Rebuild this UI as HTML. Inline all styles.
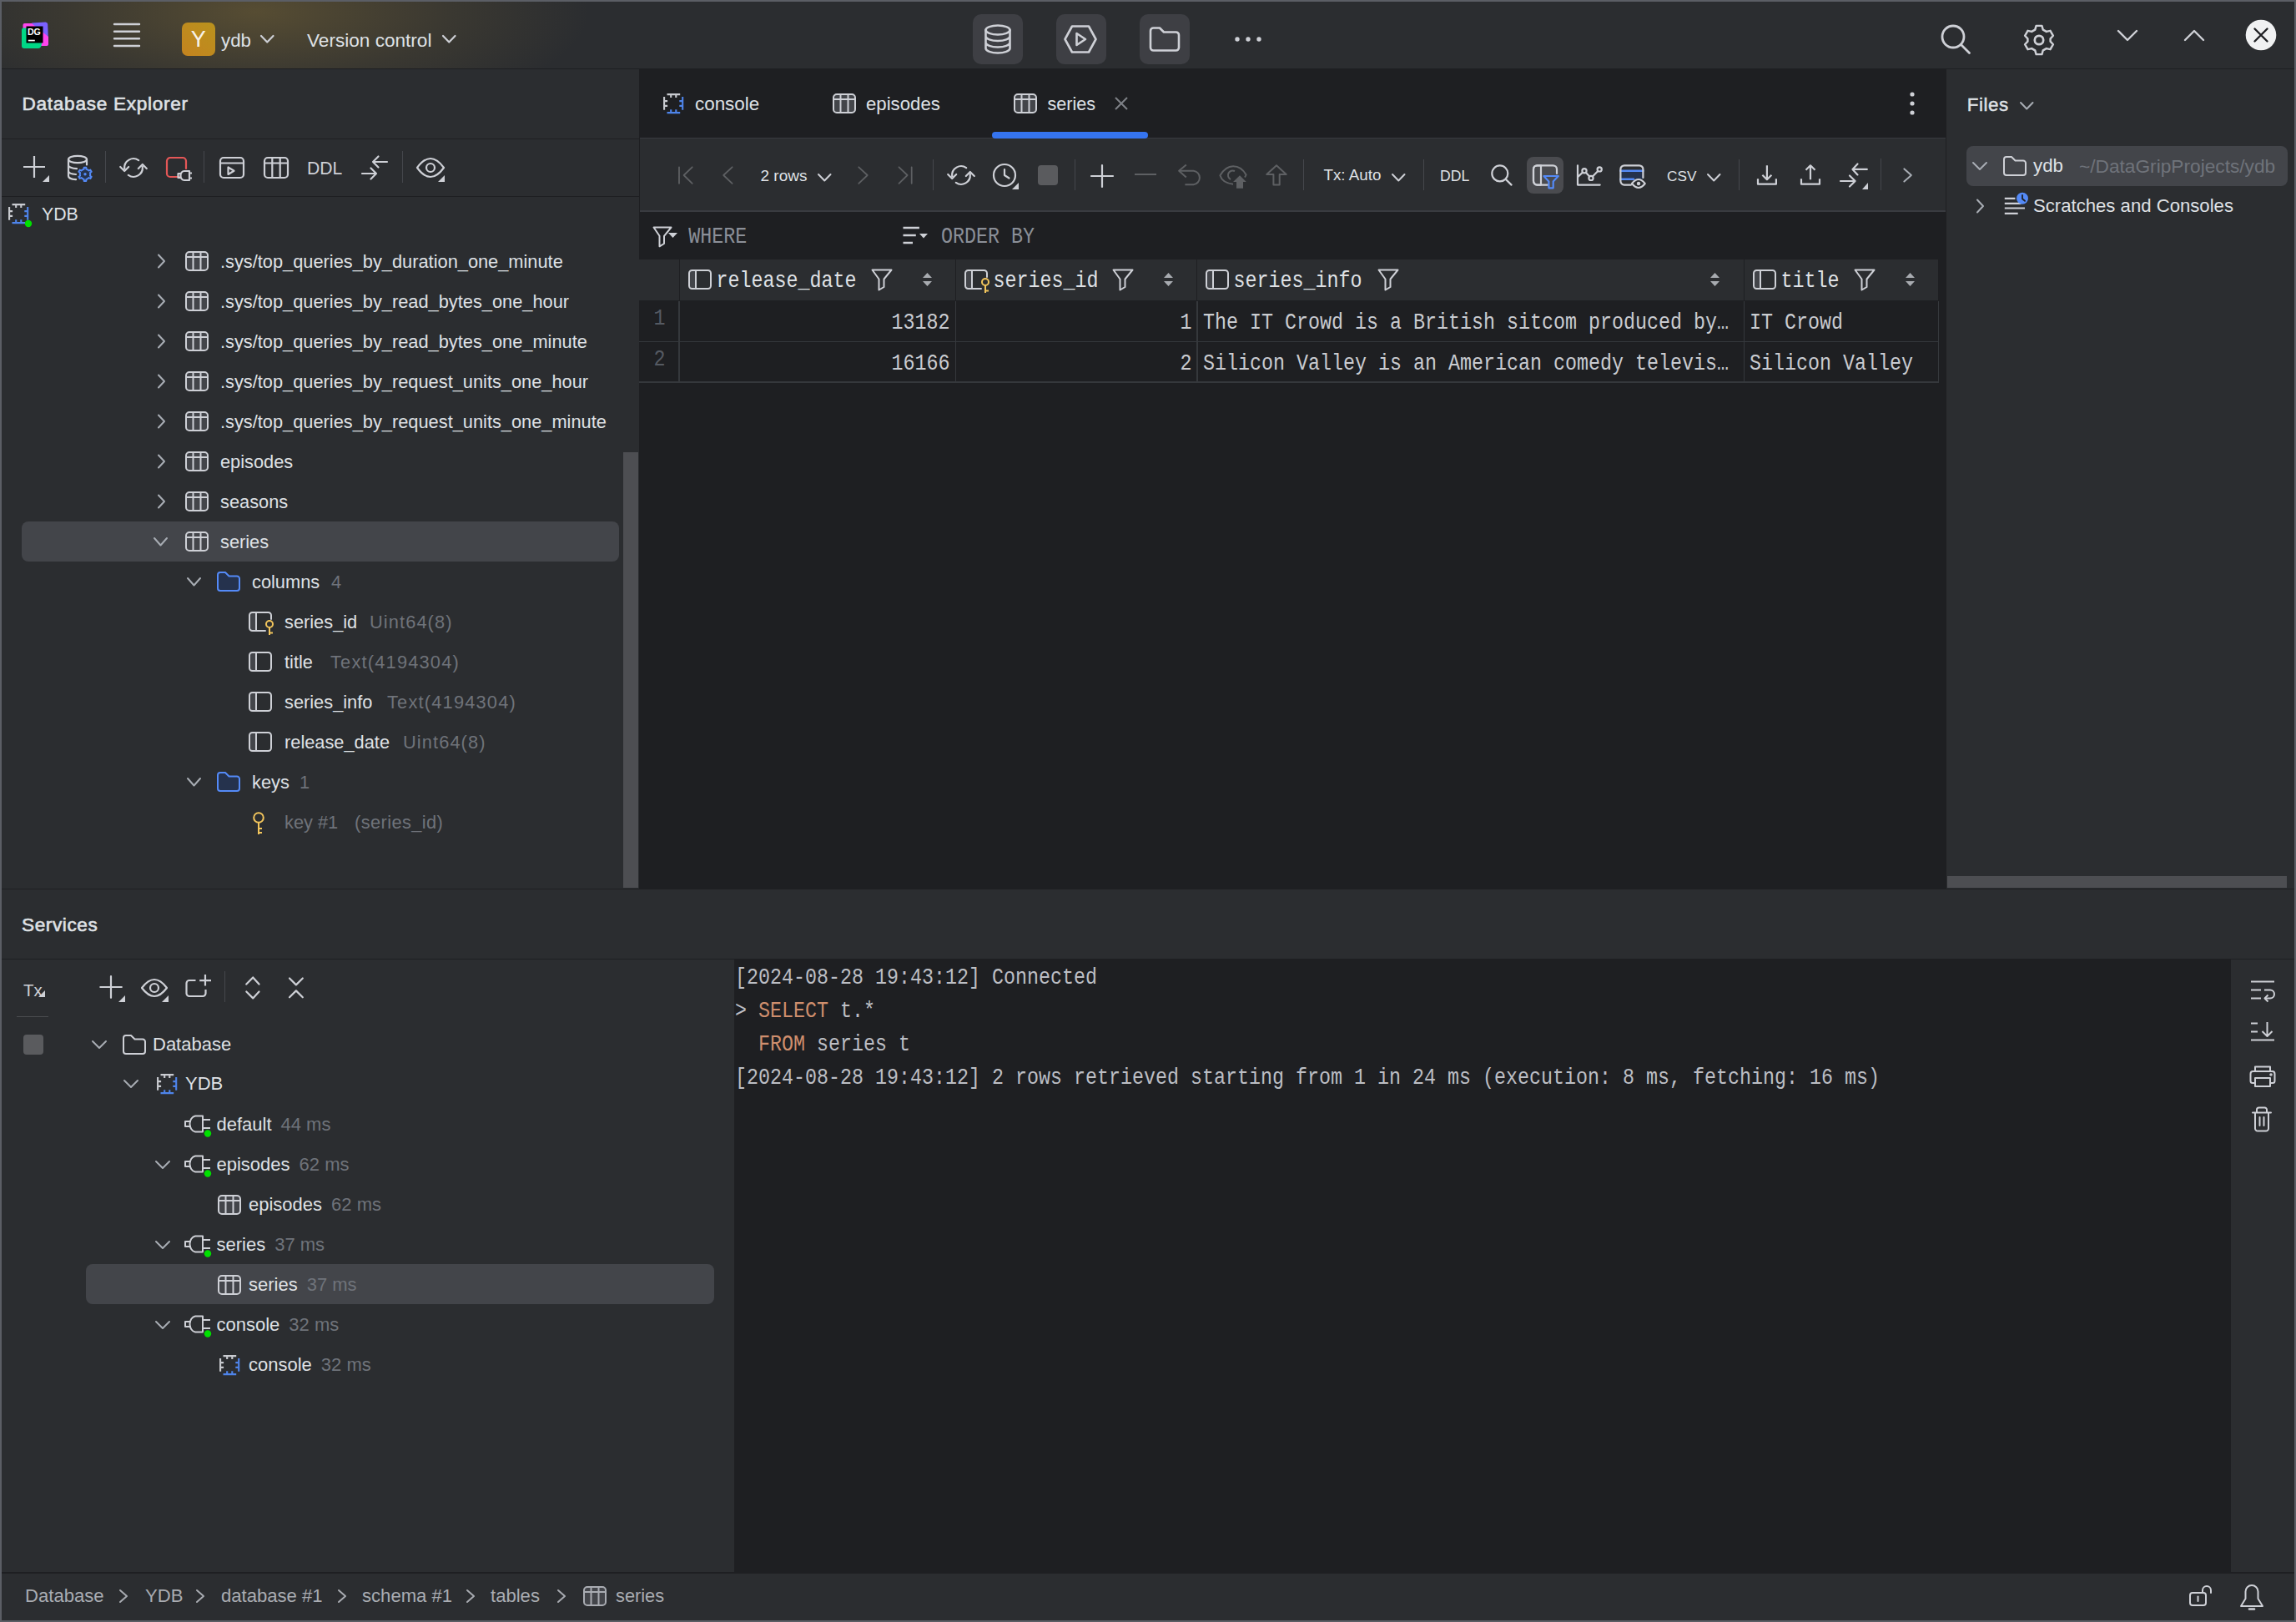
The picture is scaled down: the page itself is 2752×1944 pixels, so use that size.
<!DOCTYPE html>
<html><head><meta charset="utf-8"><style>
html,body{margin:0;padding:0;width:2752px;height:1944px;overflow:hidden;background:#2B2D30}
#r{position:relative;width:2752px;height:1944px;overflow:hidden}
#r div{position:absolute;box-sizing:border-box}
#r .t{white-space:pre}
</style></head><body><div id="r">
<div style="left:0px;top:0px;width:2752px;height:1944px;background:#5B5E65;"></div>
<div style="left:2px;top:2px;width:2748px;height:1940px;background:#2B2D30;"></div>
<div style="left:2px;top:2px;width:2748px;height:80px;background:#2B2D30;"></div>
<div style="left:2px;top:2px;width:1100px;height:80px;background:radial-gradient(ellipse 400px 135px at 305px 12px, rgba(160,130,55,0.37), rgba(160,130,55,0.13) 58%, rgba(160,130,55,0) 100%);"></div>
<div style="left:2px;top:82px;width:2748px;height:1px;background:#1E1F22;"></div>
<div style="left:2px;top:83px;width:764px;height:982px;background:#2B2D30;"></div>
<div style="left:2px;top:166px;width:764px;height:1px;background:#1E1F22;"></div>
<div style="left:2px;top:235px;width:764px;height:1px;background:#1E1F22;"></div>
<div style="left:766px;top:83px;width:1567px;height:982px;background:#1E1F22;"></div>
<div style="left:767px;top:165px;width:1565px;height:88px;background:#2B2D30;"></div>
<div style="left:767px;top:165px;width:1565px;height:1px;background:#393B40;"></div>
<div style="left:767px;top:252px;width:1565px;height:2px;background:#393B40;"></div>
<div style="left:2333px;top:83px;width:417px;height:982px;background:#2B2D30;"></div>
<div style="left:2px;top:1065px;width:2748px;height:1px;background:#1E1F22;"></div>
<div style="left:2px;top:1066px;width:2748px;height:818px;background:#2B2D30;"></div>
<div style="left:2px;top:1149px;width:2748px;height:1px;background:#1E1F22;"></div>
<div style="left:880px;top:1150px;width:1794px;height:734px;background:#1E1F22;"></div>
<div style="left:2px;top:1884px;width:2748px;height:2px;background:#1E1F22;"></div>
<div style="left:2px;top:1886px;width:2748px;height:56px;background:#2B2D30;"></div>
<svg style="position:absolute;left:25px;top:25px" width="34" height="34" viewBox="0 0 34 34">
<path d="M13 2.5 L29.5 1.5 Q32 1.5 32.2 4 L33 27 Q33 30 30 30 L19 30 Z" fill="#7B61FF"/>
<path d="M4.5 3 L13 3 L33 19 L33 27.5 Q33 30 30.5 30 L20 30 L2.5 13 L2.5 5 Q2.5 3 4.5 3 Z" fill="#FF45ED"/>
<path d="M1 11 Q1 8.5 3.5 8.5 L20 8.5 L25 26 Q25 33 21 33 L4 33 Q1 33 1 30 Z" fill="#00D886"/>
<rect x="6.5" y="6.5" width="20" height="20" fill="#000"/>
<text x="7.9" y="17" font-family="Liberation Sans" font-weight="700" font-size="10.6" fill="#fff">DG</text>
<rect x="8.8" y="22.7" width="8" height="1.7" fill="#fff"/>
</svg>
<svg style="position:absolute;left:134px;top:25px;overflow:visible" width="36" height="36" viewBox="0 0 36 36" fill="none" stroke="#CED0D6" stroke-width="2.4" stroke-linecap="round" stroke-linejoin="round"><path d="M3 4H33M3 12.7H33M3 21.3H33M3 30H33"/></svg>
<div style="left:218px;top:27px;width:40px;height:40px;background:linear-gradient(40deg, #C4831F, #B9921D);border-radius:7px"></div>
<div class="t" style="left:228.7px;top:27.44px;height:40px;line-height:40px;font-size:27px;color:#F7F2E8;font-weight:400;font-family:'Liberation Sans', sans-serif;">Y</div>
<div class="t" style="left:265px;top:29.27px;height:40px;line-height:40px;font-size:22.3px;color:#DFE1E5;font-weight:400;font-family:'Liberation Sans', sans-serif;">ydb</div>
<svg style="position:absolute;left:311px;top:40.5px;overflow:visible" width="18.5" height="11.5" viewBox="0 0 18.5 11.5" fill="none" stroke="#CED0D6" stroke-width="2.2" stroke-linecap="round" stroke-linejoin="round"><path d="M2 2L9.25 9.5L16.5 2"/></svg>
<div class="t" style="left:368px;top:29.17px;height:40px;line-height:40px;font-size:22.6px;color:#DFE1E5;font-weight:400;font-family:'Liberation Sans', sans-serif;">Version control</div>
<svg style="position:absolute;left:529px;top:40.5px;overflow:visible" width="18.5" height="11.5" viewBox="0 0 18.5 11.5" fill="none" stroke="#CED0D6" stroke-width="2.2" stroke-linecap="round" stroke-linejoin="round"><path d="M2 2L9.25 9.5L16.5 2"/></svg>
<div style="left:1166px;top:17px;width:60px;height:60px;background:#3E3F44;border-radius:10px"></div>
<div style="left:1266px;top:17px;width:60px;height:60px;background:#3E3F44;border-radius:10px"></div>
<div style="left:1366px;top:17px;width:60px;height:60px;background:#3E3F44;border-radius:10px"></div>
<svg style="position:absolute;left:1178px;top:28px;overflow:visible" width="36" height="38" viewBox="0 0 36 38" fill="none" stroke="#CED0D6" stroke-width="2.6" stroke-linecap="round" stroke-linejoin="round"><ellipse cx="18" cy="8" rx="14.5" ry="5.5"/><path d="M3.5 8V30A14.5 5.5 0 0 0 32.5 30V8M3.5 15.5A14.5 5.5 0 0 0 32.5 15.5M3.5 23A14.5 5.5 0 0 0 32.5 23"/></svg>
<svg style="position:absolute;left:1274px;top:29px;overflow:visible" width="42" height="36" viewBox="0 0 42 36" fill="none" stroke="#CED0D6" stroke-width="2.6" stroke-linecap="round" stroke-linejoin="round"><path d="M11 2.5H31L39.5 18L31 33.5H11L2.5 18Z"/><path d="M16.5 11V25L27 18Z"/></svg>
<svg style="position:absolute;left:1376px;top:31px;overflow:visible" width="40" height="32" viewBox="0 0 40 32" fill="none" stroke="#CED0D6" stroke-width="2.6" stroke-linecap="round" stroke-linejoin="round"><path d="M3 6A3.5 3.5 0 0 1 6.5 2.5H14L19 7.5H33.5A3.5 3.5 0 0 1 37 11V26A3.5 3.5 0 0 1 33.5 29.5H6.5A3.5 3.5 0 0 1 3 26Z"/></svg>
<svg style="position:absolute;left:1478px;top:42px;overflow:visible" width="36" height="10" viewBox="0 0 36 10" fill="#CED0D6" stroke="none" stroke-width="2" stroke-linecap="round" stroke-linejoin="round"><circle cx="5" cy="5" r="2.7"/><circle cx="18" cy="5" r="2.7"/><circle cx="31" cy="5" r="2.7"/></svg>
<svg style="position:absolute;left:2325px;top:28px;overflow:visible" width="40" height="40" viewBox="0 0 40 40" fill="none" stroke="#CED0D6" stroke-width="2.8" stroke-linecap="round" stroke-linejoin="round"><circle cx="16" cy="16" r="13"/><path d="M25.5 25.5L35.5 35.5"/></svg>
<svg style="position:absolute;left:2424px;top:26px;overflow:visible" width="40" height="42" viewBox="0 0 40 42" fill="none" stroke="#CED0D6" stroke-width="2.7" stroke-linecap="round" stroke-linejoin="round"><path d="M16.2 3H23.8L25.3 8.2L29.8 10.8L35 9.6L38.8 16.2L35.1 20.1V23.9L38.8 27.8L35 34.4L29.8 33.2L25.3 35.8L23.8 41H16.2L14.7 35.8L10.2 33.2L5 34.4L1.2 27.8L4.9 23.9V20.1L1.2 16.2L5 9.6L10.2 10.8L14.7 8.2Z" transform="translate(20 22) scale(0.9) translate(-20 -22)"/><circle cx="20" cy="22" r="5.2"/></svg>
<svg style="position:absolute;left:2536px;top:34px;overflow:visible" width="28" height="18" viewBox="0 0 28 18" fill="none" stroke="#CED0D6" stroke-width="2.4" stroke-linecap="round" stroke-linejoin="round"><path d="M3 3L14 14L25 3"/></svg>
<svg style="position:absolute;left:2616px;top:33px;overflow:visible" width="28" height="18" viewBox="0 0 28 18" fill="none" stroke="#CED0D6" stroke-width="2.4" stroke-linecap="round" stroke-linejoin="round"><path d="M3 15L14 4L25 15"/></svg>
<svg style="position:absolute;left:2690px;top:22px;overflow:visible" width="40" height="40" viewBox="0 0 40 40" fill="none" stroke="none" stroke-width="2" stroke-linecap="round" stroke-linejoin="round"><circle cx="20" cy="20" r="18.3" fill="#F0F1F2" stroke="none"/><path d="M12.5 12.5L27.5 27.5M27.5 12.5L12.5 27.5" stroke="#1E1F22" stroke-width="2.4"/></svg>
<div class="t" style="left:26.5px;top:105.17px;height:40px;line-height:40px;font-size:22.6px;color:#DFE1E5;font-weight:400;font-family:'Liberation Sans', sans-serif;-webkit-text-stroke:0.6px #DFE1E5;letter-spacing:0.72px">Database Explorer</div>
<svg style="position:absolute;left:26px;top:185px;overflow:visible" width="32" height="32" viewBox="0 0 32 32" fill="none" stroke="#CED0D6" stroke-width="2.2" stroke-linecap="butt" stroke-linejoin="round"><path d="M15 2V28M2 15H28"/></svg>
<svg style="position:absolute;left:51px;top:210px;overflow:visible" width="8" height="8" viewBox="0 0 8 8" fill="none" stroke="none" stroke-width="2" stroke-linecap="round" stroke-linejoin="round"><path d="M8 0V8H0Z" fill="#CED0D6" stroke="none"/></svg>
<svg style="position:absolute;left:80px;top:185px;overflow:visible" width="38" height="34" viewBox="0 0 38 34" fill="none" stroke="#CED0D6" stroke-width="2.2" stroke-linecap="round" stroke-linejoin="round"><ellipse cx="13" cy="6" rx="11" ry="4.2"/><path d="M2 6V26A11 4.2 0 0 0 11 30.2M24 6V12.5M2 13A11 4.2 0 0 0 12 17.2M2 20A11 4.2 0 0 0 11 24"/><path d="M19.48 18.14L20.61 17.76L20.72 15.70L23.28 15.70L23.39 17.76L24.52 18.14L25.64 18.78L26.53 19.57L28.37 18.64L29.66 20.86L27.93 21.99L28.17 23.15L28.17 24.45L27.93 25.61L29.66 26.74L28.37 28.96L26.53 28.03L25.64 28.82L24.52 29.46L23.39 29.84L23.28 31.90L20.72 31.90L20.61 29.84L19.48 29.46L18.36 28.82L17.47 28.03L15.63 28.96L14.34 26.74L16.07 25.61L15.83 24.45L15.83 23.15L16.07 21.99L14.34 20.86L15.63 18.64L17.47 19.57L18.36 18.78Z" fill="#25324D" stroke="#548AF7" stroke-width="2"/><circle cx="22" cy="23.8" r="1.7" fill="#548AF7" stroke="none"/></svg>
<div style="left:126px;top:181px;width:1px;height:38px;background:#45474C;"></div>
<svg style="position:absolute;left:140px;top:181px;overflow:visible" width="40" height="40" viewBox="0 0 40 40" fill="none" stroke="#CED0D6" stroke-width="2.2" stroke-linecap="round" stroke-linejoin="round"><path d="M9.20 21.00A10.8 10.8 0 0 1 26.19 11.15M30.80 19.00A10.8 10.8 0 0 1 13.81 28.85M4.20 19.00L9.20 24.00L14.20 19.00M25.80 21.00L30.80 16.00L35.80 21.00"/></svg>
<svg style="position:absolute;left:198px;top:187px;overflow:visible" width="34" height="34" viewBox="0 0 34 34" fill="none" stroke="#CED0D6" stroke-width="2.2" stroke-linecap="round" stroke-linejoin="round"><path d="M17 25H6A4 4 0 0 1 2 21V6A4 4 0 0 1 6 2H21A4 4 0 0 1 25 6V15" stroke="#E55757"/><path d="M18.5 21H15.5V26H18.5M29 18H23A4.5 5 0 0 0 18.5 23.5A4.5 5 0 0 0 23 29H29ZM29 20.5H32M29 26.5H32" stroke-linecap="butt"/></svg>
<div style="left:244px;top:181px;width:1px;height:38px;background:#45474C;"></div>
<svg style="position:absolute;left:262px;top:187px;overflow:visible" width="32" height="28" viewBox="0 0 32 28" fill="none" stroke="#CED0D6" stroke-width="2.2" stroke-linecap="round" stroke-linejoin="round"><rect x="2" y="2" width="28" height="24" rx="4"/><path d="M2 8.5H30"/><path d="M11.5 13.5V22L18.5 17.75Z"/></svg>
<svg style="position:absolute;left:315px;top:187px;overflow:visible" width="32" height="28" viewBox="0 0 32 28" fill="none" stroke="#CED0D6" stroke-width="2.2" stroke-linecap="round" stroke-linejoin="round"><rect x="2" y="2" width="28" height="24" rx="4"/><path d="M2 8.5H30M11.3 2V26M20.7 2V26"/></svg>
<div class="t" style="left:368px;top:181.65px;height:40px;line-height:40px;font-size:21.2px;color:#CED0D6;font-weight:400;font-family:'Liberation Sans', sans-serif;">DDL</div>
<svg style="position:absolute;left:432px;top:185px;overflow:visible" width="36" height="32" viewBox="0 0 36 32" fill="none" stroke="#CED0D6" stroke-width="2.2" stroke-linecap="round" stroke-linejoin="round"><path d="M32 9H15M21.5 2.5L15 9L21.5 15.5"/><path d="M2 23H19M12.5 16.5L19 23L12.5 29.5"/></svg>
<div style="left:482px;top:181px;width:1px;height:38px;background:#45474C;"></div>
<svg style="position:absolute;left:498.0px;top:188.0px;overflow:visible" width="36" height="26" viewBox="0 0 36 26" fill="none" stroke="#CED0D6" stroke-width="2.2" stroke-linecap="round" stroke-linejoin="round"><path d="M2 13.0Q18.0 -9.0 34 13.0Q18.0 35.0 2 13.0Z"/><circle cx="18.0" cy="13.0" r="5"/></svg>
<svg style="position:absolute;left:525px;top:210px;overflow:visible" width="8" height="8" viewBox="0 0 8 8" fill="none" stroke="none" stroke-width="2" stroke-linecap="round" stroke-linejoin="round"><path d="M8 0V8H0Z" fill="#CED0D6" stroke="none"/></svg>
<svg style="position:absolute;left:8.8px;top:243px;overflow:visible" width="27" height="27" viewBox="0 0 27 27" fill="none" stroke="#CED0D6" stroke-width="2.1" stroke-linecap="round" stroke-linejoin="round"><path d="M5.5 2.1H21.2M10.2 2.1V5.9M16.3 2.1V5.9M2.1 5.1V20.8M2.1 10.1H6.1M2.1 15.9H6.1" stroke="#C9CBD0" stroke-linecap="butt"/><path d="M5.5 24.1H21.2M10.2 24.1V20.2M16.3 24.1V20.2M24.2 5.1V20.8M24.2 10.1H20.3M24.2 15.9H20.3" stroke="#4E84EA" stroke-linecap="butt"/></svg>
<svg style="position:absolute;left:28.200000000000003px;top:262.3px;overflow:visible" width="12" height="12" viewBox="0 0 12 12" fill="none" stroke="#CED0D6" stroke-width="2" stroke-linecap="round" stroke-linejoin="round"><circle cx="6" cy="6" r="4.2" fill="#00E000" stroke="none"/></svg>
<div class="t" style="left:50px;top:236.62px;height:40px;line-height:40px;font-size:21.3px;color:#DFE1E5;font-weight:400;font-family:'Liberation Sans', sans-serif;">YDB</div>
<svg style="position:absolute;left:187px;top:303px;overflow:visible" width="14" height="20" viewBox="0 0 14 20" fill="none" stroke="#A8ADB4" stroke-width="2" stroke-linecap="round" stroke-linejoin="round"><path d="M3 2.5L10 10L3 17.5"/></svg>
<svg style="position:absolute;left:221px;top:300px;overflow:visible" width="30" height="26" viewBox="0 0 30 26" fill="none" stroke="#CED0D6" stroke-width="2" stroke-linecap="round" stroke-linejoin="round"><rect x="2" y="2" width="26" height="22" rx="4" fill="#43454A"/><path d="M2 8H28M10.5 2V24M19.5 2V24"/></svg>
<div class="t" style="left:264px;top:294.44px;height:40px;line-height:40px;font-size:21.8px;color:#DFE1E5;font-weight:400;font-family:'Liberation Sans', sans-serif;">.sys/top_queries_by_duration_one_minute</div>
<svg style="position:absolute;left:187px;top:351px;overflow:visible" width="14" height="20" viewBox="0 0 14 20" fill="none" stroke="#A8ADB4" stroke-width="2" stroke-linecap="round" stroke-linejoin="round"><path d="M3 2.5L10 10L3 17.5"/></svg>
<svg style="position:absolute;left:221px;top:348px;overflow:visible" width="30" height="26" viewBox="0 0 30 26" fill="none" stroke="#CED0D6" stroke-width="2" stroke-linecap="round" stroke-linejoin="round"><rect x="2" y="2" width="26" height="22" rx="4" fill="#43454A"/><path d="M2 8H28M10.5 2V24M19.5 2V24"/></svg>
<div class="t" style="left:264px;top:342.44px;height:40px;line-height:40px;font-size:21.8px;color:#DFE1E5;font-weight:400;font-family:'Liberation Sans', sans-serif;">.sys/top_queries_by_read_bytes_one_hour</div>
<svg style="position:absolute;left:187px;top:399px;overflow:visible" width="14" height="20" viewBox="0 0 14 20" fill="none" stroke="#A8ADB4" stroke-width="2" stroke-linecap="round" stroke-linejoin="round"><path d="M3 2.5L10 10L3 17.5"/></svg>
<svg style="position:absolute;left:221px;top:396px;overflow:visible" width="30" height="26" viewBox="0 0 30 26" fill="none" stroke="#CED0D6" stroke-width="2" stroke-linecap="round" stroke-linejoin="round"><rect x="2" y="2" width="26" height="22" rx="4" fill="#43454A"/><path d="M2 8H28M10.5 2V24M19.5 2V24"/></svg>
<div class="t" style="left:264px;top:390.44px;height:40px;line-height:40px;font-size:21.8px;color:#DFE1E5;font-weight:400;font-family:'Liberation Sans', sans-serif;">.sys/top_queries_by_read_bytes_one_minute</div>
<svg style="position:absolute;left:187px;top:447px;overflow:visible" width="14" height="20" viewBox="0 0 14 20" fill="none" stroke="#A8ADB4" stroke-width="2" stroke-linecap="round" stroke-linejoin="round"><path d="M3 2.5L10 10L3 17.5"/></svg>
<svg style="position:absolute;left:221px;top:444px;overflow:visible" width="30" height="26" viewBox="0 0 30 26" fill="none" stroke="#CED0D6" stroke-width="2" stroke-linecap="round" stroke-linejoin="round"><rect x="2" y="2" width="26" height="22" rx="4" fill="#43454A"/><path d="M2 8H28M10.5 2V24M19.5 2V24"/></svg>
<div class="t" style="left:264px;top:438.44px;height:40px;line-height:40px;font-size:21.8px;color:#DFE1E5;font-weight:400;font-family:'Liberation Sans', sans-serif;">.sys/top_queries_by_request_units_one_hour</div>
<svg style="position:absolute;left:187px;top:495px;overflow:visible" width="14" height="20" viewBox="0 0 14 20" fill="none" stroke="#A8ADB4" stroke-width="2" stroke-linecap="round" stroke-linejoin="round"><path d="M3 2.5L10 10L3 17.5"/></svg>
<svg style="position:absolute;left:221px;top:492px;overflow:visible" width="30" height="26" viewBox="0 0 30 26" fill="none" stroke="#CED0D6" stroke-width="2" stroke-linecap="round" stroke-linejoin="round"><rect x="2" y="2" width="26" height="22" rx="4" fill="#43454A"/><path d="M2 8H28M10.5 2V24M19.5 2V24"/></svg>
<div class="t" style="left:264px;top:486.44px;height:40px;line-height:40px;font-size:21.8px;color:#DFE1E5;font-weight:400;font-family:'Liberation Sans', sans-serif;">.sys/top_queries_by_request_units_one_minute</div>
<svg style="position:absolute;left:187px;top:543px;overflow:visible" width="14" height="20" viewBox="0 0 14 20" fill="none" stroke="#A8ADB4" stroke-width="2" stroke-linecap="round" stroke-linejoin="round"><path d="M3 2.5L10 10L3 17.5"/></svg>
<svg style="position:absolute;left:221px;top:540px;overflow:visible" width="30" height="26" viewBox="0 0 30 26" fill="none" stroke="#CED0D6" stroke-width="2" stroke-linecap="round" stroke-linejoin="round"><rect x="2" y="2" width="26" height="22" rx="4" fill="#43454A"/><path d="M2 8H28M10.5 2V24M19.5 2V24"/></svg>
<div class="t" style="left:264px;top:534.44px;height:40px;line-height:40px;font-size:21.8px;color:#DFE1E5;font-weight:400;font-family:'Liberation Sans', sans-serif;">episodes</div>
<svg style="position:absolute;left:187px;top:591px;overflow:visible" width="14" height="20" viewBox="0 0 14 20" fill="none" stroke="#A8ADB4" stroke-width="2" stroke-linecap="round" stroke-linejoin="round"><path d="M3 2.5L10 10L3 17.5"/></svg>
<svg style="position:absolute;left:221px;top:588px;overflow:visible" width="30" height="26" viewBox="0 0 30 26" fill="none" stroke="#CED0D6" stroke-width="2" stroke-linecap="round" stroke-linejoin="round"><rect x="2" y="2" width="26" height="22" rx="4" fill="#43454A"/><path d="M2 8H28M10.5 2V24M19.5 2V24"/></svg>
<div class="t" style="left:264px;top:582.44px;height:40px;line-height:40px;font-size:21.8px;color:#DFE1E5;font-weight:400;font-family:'Liberation Sans', sans-serif;">seasons</div>
<div style="left:26px;top:625px;width:716px;height:48px;background:#43454A;border-radius:8px"></div>
<svg style="position:absolute;left:183px;top:643px;overflow:visible" width="19" height="12.5" viewBox="0 0 19 12.5" fill="none" stroke="#A8ADB4" stroke-width="2" stroke-linecap="round" stroke-linejoin="round"><path d="M2 2L9.5 10.5L17 2"/></svg>
<svg style="position:absolute;left:221px;top:636px;overflow:visible" width="30" height="26" viewBox="0 0 30 26" fill="none" stroke="#CED0D6" stroke-width="2" stroke-linecap="round" stroke-linejoin="round"><rect x="2" y="2" width="26" height="22" rx="4" fill="#43454A"/><path d="M2 8H28M10.5 2V24M19.5 2V24"/></svg>
<div class="t" style="left:264px;top:630.44px;height:40px;line-height:40px;font-size:21.8px;color:#DFE1E5;font-weight:400;font-family:'Liberation Sans', sans-serif;">series</div>
<svg style="position:absolute;left:222.5px;top:691px;overflow:visible" width="19" height="12.5" viewBox="0 0 19 12.5" fill="none" stroke="#A8ADB4" stroke-width="2" stroke-linecap="round" stroke-linejoin="round"><path d="M2 2L9.5 10.5L17 2"/></svg>
<svg style="position:absolute;left:259px;top:684px;overflow:visible" width="30" height="26" viewBox="0 0 30 26" fill="none" stroke="#548AF7" stroke-width="2" stroke-linecap="round" stroke-linejoin="round"><path d="M2 5A3 3 0 0 1 5 2H11L15.5 6.5H25A3 3 0 0 1 28 9.5V21A3 3 0 0 1 25 24H5A3 3 0 0 1 2 21Z" fill="#25324D"/></svg>
<div class="t" style="left:302px;top:678.44px;height:40px;line-height:40px;font-size:21.8px;color:#DFE1E5;font-weight:400;font-family:'Liberation Sans', sans-serif;">columns</div>
<div class="t" style="left:397px;top:678.44px;height:40px;line-height:40px;font-size:21.8px;color:#6F737A;font-weight:400;font-family:'Liberation Sans', sans-serif;">4</div>
<svg style="position:absolute;left:297px;top:732px;overflow:visible" width="32" height="31" viewBox="0 0 32 31" fill="none" stroke="#CED0D6" stroke-width="2" stroke-linecap="round" stroke-linejoin="round"><path d="M10 2H5.5A3.5 3.5 0 0 0 2 5.5V20.5A3.5 3.5 0 0 0 5.5 24H10Z" fill="#43454A" stroke="none"/><path d="M21 24H5.5A3.5 3.5 0 0 1 2 20.5V5.5A3.5 3.5 0 0 1 5.5 2H24.5A3.5 3.5 0 0 1 28 5.5V10M10 2V24"/><circle cx="26" cy="16" r="4" stroke="#F2C55C"/><path d="M26 20V29M26 26.5H30" stroke="#F2C55C" stroke-linecap="butt"/></svg>
<div class="t" style="left:341px;top:726.44px;height:40px;line-height:40px;font-size:21.8px;color:#DFE1E5;font-weight:400;font-family:'Liberation Sans', sans-serif;">series_id</div>
<div class="t" style="left:443px;top:726.44px;height:40px;line-height:40px;font-size:21.8px;color:#6F737A;font-weight:400;font-family:'Liberation Sans', sans-serif;letter-spacing:1.1px">Uint64(8)</div>
<svg style="position:absolute;left:297px;top:780px;overflow:visible" width="30" height="26" viewBox="0 0 30 26" fill="none" stroke="#CED0D6" stroke-width="2" stroke-linecap="round" stroke-linejoin="round"><path d="M10 2H5.5A3.5 3.5 0 0 0 2 5.5V20.5A3.5 3.5 0 0 0 5.5 24H10Z" fill="#43454A" stroke="none"/><rect x="2" y="2" width="26" height="22" rx="3.5"/><path d="M10 2V24"/></svg>
<div class="t" style="left:341px;top:774.44px;height:40px;line-height:40px;font-size:21.8px;color:#DFE1E5;font-weight:400;font-family:'Liberation Sans', sans-serif;">title</div>
<div class="t" style="left:396px;top:774.44px;height:40px;line-height:40px;font-size:21.8px;color:#6F737A;font-weight:400;font-family:'Liberation Sans', sans-serif;letter-spacing:1.2px">Text(4194304)</div>
<svg style="position:absolute;left:297px;top:828px;overflow:visible" width="30" height="26" viewBox="0 0 30 26" fill="none" stroke="#CED0D6" stroke-width="2" stroke-linecap="round" stroke-linejoin="round"><path d="M10 2H5.5A3.5 3.5 0 0 0 2 5.5V20.5A3.5 3.5 0 0 0 5.5 24H10Z" fill="#43454A" stroke="none"/><rect x="2" y="2" width="26" height="22" rx="3.5"/><path d="M10 2V24"/></svg>
<div class="t" style="left:341px;top:822.44px;height:40px;line-height:40px;font-size:21.8px;color:#DFE1E5;font-weight:400;font-family:'Liberation Sans', sans-serif;">series_info</div>
<div class="t" style="left:464px;top:822.44px;height:40px;line-height:40px;font-size:21.8px;color:#6F737A;font-weight:400;font-family:'Liberation Sans', sans-serif;letter-spacing:1.2px">Text(4194304)</div>
<svg style="position:absolute;left:297px;top:876px;overflow:visible" width="30" height="26" viewBox="0 0 30 26" fill="none" stroke="#CED0D6" stroke-width="2" stroke-linecap="round" stroke-linejoin="round"><path d="M10 2H5.5A3.5 3.5 0 0 0 2 5.5V20.5A3.5 3.5 0 0 0 5.5 24H10Z" fill="#43454A" stroke="none"/><rect x="2" y="2" width="26" height="22" rx="3.5"/><path d="M10 2V24"/></svg>
<div class="t" style="left:341px;top:870.44px;height:40px;line-height:40px;font-size:21.8px;color:#DFE1E5;font-weight:400;font-family:'Liberation Sans', sans-serif;">release_date</div>
<div class="t" style="left:483px;top:870.44px;height:40px;line-height:40px;font-size:21.8px;color:#6F737A;font-weight:400;font-family:'Liberation Sans', sans-serif;letter-spacing:1.1px">Uint64(8)</div>
<svg style="position:absolute;left:222.5px;top:931px;overflow:visible" width="19" height="12.5" viewBox="0 0 19 12.5" fill="none" stroke="#A8ADB4" stroke-width="2" stroke-linecap="round" stroke-linejoin="round"><path d="M2 2L9.5 10.5L17 2"/></svg>
<svg style="position:absolute;left:259px;top:924px;overflow:visible" width="30" height="26" viewBox="0 0 30 26" fill="none" stroke="#548AF7" stroke-width="2" stroke-linecap="round" stroke-linejoin="round"><path d="M2 5A3 3 0 0 1 5 2H11L15.5 6.5H25A3 3 0 0 1 28 9.5V21A3 3 0 0 1 25 24H5A3 3 0 0 1 2 21Z" fill="#25324D"/></svg>
<div class="t" style="left:302px;top:918.44px;height:40px;line-height:40px;font-size:21.8px;color:#DFE1E5;font-weight:400;font-family:'Liberation Sans', sans-serif;">keys</div>
<div class="t" style="left:359px;top:918.44px;height:40px;line-height:40px;font-size:21.8px;color:#6F737A;font-weight:400;font-family:'Liberation Sans', sans-serif;">1</div>
<svg style="position:absolute;left:301px;top:973px;overflow:visible" width="20" height="30" viewBox="0 0 20 30" fill="none" stroke="#F2C55C" stroke-width="2" stroke-linecap="round" stroke-linejoin="round"><circle cx="9" cy="7" r="5.8"/><path d="M9 12.8V27M9 20H13M9 25H13" stroke-linecap="butt"/></svg>
<div class="t" style="left:341px;top:966.44px;height:40px;line-height:40px;font-size:21.8px;color:#6F737A;font-weight:400;font-family:'Liberation Sans', sans-serif;">key #1</div>
<div class="t" style="left:425px;top:966.44px;height:40px;line-height:40px;font-size:21.8px;color:#6F737A;font-weight:400;font-family:'Liberation Sans', sans-serif;letter-spacing:0.4px">(series_id)</div>
<div style="left:747px;top:542px;width:18px;height:522px;background:#4D4E52;"></div>
<svg style="position:absolute;left:793.8px;top:111px;overflow:visible" width="27" height="27" viewBox="0 0 27 27" fill="none" stroke="#CED0D6" stroke-width="2.1" stroke-linecap="round" stroke-linejoin="round"><path d="M5.5 2.1H21.2M10.2 2.1V5.9M16.3 2.1V5.9M2.1 5.1V20.8M2.1 10.1H6.1M2.1 15.9H6.1" stroke="#C9CBD0" stroke-linecap="butt"/><path d="M5.5 24.1H21.2M10.2 24.1V20.2M16.3 24.1V20.2M24.2 5.1V20.8M24.2 10.1H20.3M24.2 15.9H20.3" stroke="#4E84EA" stroke-linecap="butt"/></svg>
<div class="t" style="left:833px;top:104.73px;height:40px;line-height:40px;font-size:22.4px;color:#DFE1E5;font-weight:400;font-family:'Liberation Sans', sans-serif;">console</div>
<svg style="position:absolute;left:997px;top:111px;overflow:visible" width="30" height="26" viewBox="0 0 30 26" fill="none" stroke="#CED0D6" stroke-width="2" stroke-linecap="round" stroke-linejoin="round"><rect x="2" y="2" width="26" height="22" rx="4" fill="#43454A"/><path d="M2 8H28M10.5 2V24M19.5 2V24"/></svg>
<div class="t" style="left:1038px;top:104.80px;height:40px;line-height:40px;font-size:22.2px;color:#DFE1E5;font-weight:400;font-family:'Liberation Sans', sans-serif;">episodes</div>
<svg style="position:absolute;left:1214px;top:111px;overflow:visible" width="30" height="26" viewBox="0 0 30 26" fill="none" stroke="#CED0D6" stroke-width="2" stroke-linecap="round" stroke-linejoin="round"><rect x="2" y="2" width="26" height="22" rx="4" fill="#43454A"/><path d="M2 8H28M10.5 2V24M19.5 2V24"/></svg>
<div class="t" style="left:1255.5px;top:105.01px;height:40px;line-height:40px;font-size:21.6px;color:#DFE1E5;font-weight:400;font-family:'Liberation Sans', sans-serif;">series</div>
<svg style="position:absolute;left:1335px;top:115px;overflow:visible" width="18" height="18" viewBox="0 0 18 18" fill="none" stroke="#7E8187" stroke-width="2" stroke-linecap="butt" stroke-linejoin="round"><path d="M2 2L16 16M16 2L2 16"/></svg>
<div style="left:1189px;top:158px;width:187px;height:8px;background:#3574F0;border-radius:4px"></div>
<svg style="position:absolute;left:2285px;top:108px;overflow:visible" width="14" height="32" viewBox="0 0 14 32" fill="#CED0D6" stroke="none" stroke-width="2" stroke-linecap="round" stroke-linejoin="round"><circle cx="7" cy="5" r="2.6"/><circle cx="7" cy="16" r="2.6"/><circle cx="7" cy="27" r="2.6"/></svg>
<svg style="position:absolute;left:810px;top:196px;overflow:visible" width="24" height="28" viewBox="0 0 24 28" fill="none" stroke="#5E6063" stroke-width="1.8" stroke-linecap="round" stroke-linejoin="round"><path d="M4 4.3V23.8M19.7 4.3L9.6 14L19.7 23.8"/></svg>
<svg style="position:absolute;left:864px;top:196px;overflow:visible" width="18" height="28" viewBox="0 0 18 28" fill="none" stroke="#5E6063" stroke-width="1.8" stroke-linecap="round" stroke-linejoin="round"><path d="M13.6 4.3L3.2 14L13.6 23.8"/></svg>
<div class="t" style="left:911.5px;top:191.41px;height:40px;line-height:40px;font-size:19px;color:#DFE1E5;font-weight:400;font-family:'Liberation Sans', sans-serif;">2 rows</div>
<svg style="position:absolute;left:979px;top:206.5px;overflow:visible" width="18.5" height="11.5" viewBox="0 0 18.5 11.5" fill="none" stroke="#CED0D6" stroke-width="2" stroke-linecap="round" stroke-linejoin="round"><path d="M2 2L9.25 9.5L16.5 2"/></svg>
<svg style="position:absolute;left:1026px;top:196px;overflow:visible" width="18" height="28" viewBox="0 0 18 28" fill="none" stroke="#5E6063" stroke-width="1.8" stroke-linecap="round" stroke-linejoin="round"><path d="M3.3 4.3L13.7 14L3.3 23.8"/></svg>
<svg style="position:absolute;left:1074px;top:196px;overflow:visible" width="24" height="28" viewBox="0 0 24 28" fill="none" stroke="#5E6063" stroke-width="1.8" stroke-linecap="round" stroke-linejoin="round"><path d="M3.5 4.3L13.6 14L3.5 23.8M18.7 4.3V23.8"/></svg>
<div style="left:1118px;top:191px;width:1px;height:37px;background:#45474C;"></div>
<svg style="position:absolute;left:1132px;top:190px;overflow:visible" width="40" height="40" viewBox="0 0 40 40" fill="none" stroke="#CED0D6" stroke-width="2.2" stroke-linecap="round" stroke-linejoin="round"><path d="M9.20 21.00A10.8 10.8 0 0 1 26.19 11.15M30.80 19.00A10.8 10.8 0 0 1 13.81 28.85M4.20 19.00L9.20 24.00L14.20 19.00M25.80 21.00L30.80 16.00L35.80 21.00"/></svg>
<svg style="position:absolute;left:1184px;top:190px;overflow:visible" width="40" height="40" viewBox="0 0 40 40" fill="none" stroke="#CED0D6" stroke-width="2.2" stroke-linecap="round" stroke-linejoin="round"><circle cx="20" cy="20" r="13"/><path d="M20 13V20L25.5 23.5"/></svg>
<svg style="position:absolute;left:1213px;top:219px;overflow:visible" width="8" height="8" viewBox="0 0 8 8" fill="none" stroke="none" stroke-width="2" stroke-linecap="round" stroke-linejoin="round"><path d="M8 0V8H0Z" fill="#CED0D6" stroke="none"/></svg>
<div style="left:1244px;top:198px;width:24px;height:24px;background:#5A5B5E;border-radius:4px"></div>
<div style="left:1288px;top:191px;width:1px;height:37px;background:#45474C;"></div>
<svg style="position:absolute;left:1305px;top:195px;overflow:visible" width="32" height="32" viewBox="0 0 32 32" fill="none" stroke="#CED0D6" stroke-width="2.2" stroke-linecap="round" stroke-linejoin="round"><path d="M16 3V29M3 16H29"/></svg>
<svg style="position:absolute;left:1356px;top:205px;overflow:visible" width="34" height="8" viewBox="0 0 34 8" fill="none" stroke="#5E6063" stroke-width="2" stroke-linecap="butt" stroke-linejoin="round"><path d="M4 4H30"/></svg>
<svg style="position:absolute;left:1408px;top:192px;overflow:visible" width="34" height="34" viewBox="0 0 34 34" fill="none" stroke="#5E6063" stroke-width="2" stroke-linecap="butt" stroke-linejoin="round"><path d="M13.8 5.4L5.1 12.7L13.8 20.5"/><path d="M5.1 12.7H22.5A8.3 8.3 0 0 1 22.5 29.2H12.4"/></svg>
<svg style="position:absolute;left:1458px;top:195px;overflow:visible" width="40" height="34" viewBox="0 0 40 34" fill="none" stroke="#5E6063" stroke-width="2" stroke-linecap="butt" stroke-linejoin="round"><path d="M20 25.7Q7 24 4.4 15.2Q11 4.2 20 4.2Q30 4.2 35.6 14.5Q35 16 34 17.5"/><path d="M22 10A5 5 0 1 0 17 20"/><path d="M28 15.2L20 23H24V30.7H32V23H35.8Z" fill="#5E6063" stroke="none"/></svg>
<svg style="position:absolute;left:1514px;top:194px;overflow:visible" width="32" height="32" viewBox="0 0 32 32" fill="none" stroke="#5E6063" stroke-width="2" stroke-linecap="butt" stroke-linejoin="round"><path d="M16 4.3L4.3 15H12.4V27.6H19.7V15H27.7Z"/></svg>
<div style="left:1562px;top:191px;width:1px;height:37px;background:#45474C;"></div>
<div class="t" style="left:1586.5px;top:190.48px;height:40px;line-height:40px;font-size:18.8px;color:#DFE1E5;font-weight:400;font-family:'Liberation Sans', sans-serif;">Tx: Auto</div>
<svg style="position:absolute;left:1667px;top:206.5px;overflow:visible" width="18.5" height="11.5" viewBox="0 0 18.5 11.5" fill="none" stroke="#CED0D6" stroke-width="2" stroke-linecap="round" stroke-linejoin="round"><path d="M2 2L9.25 9.5L16.5 2"/></svg>
<div style="left:1706px;top:191px;width:1px;height:37px;background:#45474C;"></div>
<div class="t" style="left:1726px;top:190.90px;height:40px;line-height:40px;font-size:17.6px;color:#DFE1E5;font-weight:400;font-family:'Liberation Sans', sans-serif;">DDL</div>
<svg style="position:absolute;left:1784px;top:194px;overflow:visible" width="32" height="32" viewBox="0 0 32 32" fill="none" stroke="#CED0D6" stroke-width="2.2" stroke-linecap="round" stroke-linejoin="round"><circle cx="13.8" cy="13.9" r="9.5"/><path d="M20.8 20.9L27.6 27.6"/></svg>
<div style="left:1830px;top:188px;width:44px;height:44px;background:#4A4B4F;border-radius:8px"></div>
<svg style="position:absolute;left:1834px;top:194px;overflow:visible" width="38" height="36" viewBox="0 0 38 36" fill="none" stroke="#CED0D6" stroke-width="2.2" stroke-linecap="round" stroke-linejoin="round"><path d="M13 4.3V27.6M13 4.3H8.5A4.5 4.5 0 0 0 4 8.8V23.1A4.5 4.5 0 0 0 8.5 27.6H13Z" fill="#4A4B4F"/><path d="M21 27.6H8.5A4.5 4.5 0 0 1 4 23.1V8.8A4.5 4.5 0 0 1 8.5 4.3H27.5A4.5 4.5 0 0 1 32 8.8V14"/><path d="M16.5 17H33.8L27.7 23.6V31.3H22.4V23.6Z" stroke="#548AF7"/></svg>
<svg style="position:absolute;left:1886px;top:194px;overflow:visible" width="36" height="32" viewBox="0 0 36 32" fill="none" stroke="#CED0D6" stroke-width="2.2" stroke-linecap="round" stroke-linejoin="round"><path d="M5 4.3V27.6H31.7"/><path d="M5.6 17.6L13 10.7L21 19.4L31.2 8.9"/><circle cx="13" cy="10.7" r="2.6" fill="#2B2D30"/><circle cx="21" cy="19.4" r="2.6" fill="#2B2D30"/><circle cx="31.2" cy="8.9" r="2.6" fill="#2B2D30"/></svg>
<svg style="position:absolute;left:1938px;top:194px;overflow:visible" width="38" height="36" viewBox="0 0 38 36" fill="none" stroke="#CED0D6" stroke-width="2.2" stroke-linecap="round" stroke-linejoin="round"><path d="M4.4 10.7H31.4V20.8H4.4Z" fill="#25324D" stroke="none"/><path d="M4.4 10.7H31.4M4.4 20.8H20" stroke="#548AF7" stroke-width="2.6"/><path d="M17 27.6H8.9A4.5 4.5 0 0 1 4.4 23.1V8.8A4.5 4.5 0 0 1 8.9 4.3H26.9A4.5 4.5 0 0 1 31.4 8.8V19"/><path d="M18 26Q26 16 33.7 26Q26 36 18 26Z" fill="#2B2D30"/><circle cx="26" cy="26" r="2.2" fill="#CED0D6" stroke="none"/></svg>
<div class="t" style="left:1998px;top:191.04px;height:40px;line-height:40px;font-size:17.2px;color:#DFE1E5;font-weight:400;font-family:'Liberation Sans', sans-serif;">CSV</div>
<svg style="position:absolute;left:2045px;top:206.5px;overflow:visible" width="18.5" height="11.5" viewBox="0 0 18.5 11.5" fill="none" stroke="#CED0D6" stroke-width="2" stroke-linecap="round" stroke-linejoin="round"><path d="M2 2L9.25 9.5L16.5 2"/></svg>
<div style="left:2084px;top:191px;width:1px;height:37px;background:#45474C;"></div>
<svg style="position:absolute;left:2102px;top:194px;overflow:visible" width="32" height="32" viewBox="0 0 32 32" fill="none" stroke="#CED0D6" stroke-width="2.2" stroke-linecap="butt" stroke-linejoin="round"><path d="M15.9 4.3V21.2M10.4 15.7L15.9 21.2L21.4 15.7"/><path d="M5 20.3V26.7H26.9V20.3"/></svg>
<svg style="position:absolute;left:2154px;top:194px;overflow:visible" width="32" height="32" viewBox="0 0 32 32" fill="none" stroke="#CED0D6" stroke-width="2.2" stroke-linecap="butt" stroke-linejoin="round"><path d="M16 21.2V4.3M10.5 9.8L16 4.3L21.5 9.8"/><path d="M5 20.3V26.7H27V20.3"/></svg>
<svg style="position:absolute;left:2202px;top:192px;overflow:visible" width="40" height="36" viewBox="0 0 40 36" fill="none" stroke="#CED0D6" stroke-width="2.2" stroke-linecap="round" stroke-linejoin="round"><path d="M35.8 10.9H18.5M24.5 4.5L18.5 10.9L24.5 17.4"/><path d="M4 25H21.6M15 18.5L21.6 25L15 31.5"/></svg>
<svg style="position:absolute;left:2232px;top:219px;overflow:visible" width="7" height="8" viewBox="0 0 7 8" fill="none" stroke="none" stroke-width="2" stroke-linecap="round" stroke-linejoin="round"><path d="M7 0V8H0Z" fill="#CED0D6" stroke="none"/></svg>
<div style="left:2254px;top:190px;width:1px;height:38px;background:#45474C;"></div>
<svg style="position:absolute;left:2279px;top:199px;overflow:visible" width="16" height="22" viewBox="0 0 16 22" fill="none" stroke="#A8ADB4" stroke-width="2" stroke-linecap="round" stroke-linejoin="round"><path d="M3.4 3.4L11.8 11L3.4 18.5"/></svg>
<svg style="position:absolute;left:780px;top:269px;overflow:visible" width="28" height="29" viewBox="0 0 28 29" fill="none" stroke="#CED0D6" stroke-width="2" stroke-linecap="round" stroke-linejoin="round"><path d="M3.5 3.5H24.5L16 13.8V23L10.5 26.3V13.8Z"/></svg>
<svg style="position:absolute;left:801px;top:279px;overflow:visible" width="11" height="7" viewBox="0 0 11 7" fill="none" stroke="none" stroke-width="2" stroke-linecap="round" stroke-linejoin="round"><path d="M0 0H11L5.5 6Z" fill="#CED0D6" stroke="none"/></svg>
<div class="t" style="left:825.2px;top:264.79px;height:40px;line-height:40px;font-size:23.34px;color:#8B8F98;font-weight:400;font-family:'Liberation Mono', monospace;transform:scaleY(1.17);transform-origin:0 26.21px;">WHERE</div>
<svg style="position:absolute;left:1080px;top:270px;overflow:visible" width="36" height="24" viewBox="0 0 36 24" fill="none" stroke="#CED0D6" stroke-width="2" stroke-linecap="butt" stroke-linejoin="round"><path d="M2.5 3H21.9M2.5 12H17.8M2.5 21H14" stroke-width="2.4"/><path d="M22 10H32L27 15.5Z" fill="#CED0D6" stroke="none"/></svg>
<div class="t" style="left:1128px;top:264.79px;height:40px;line-height:40px;font-size:23.34px;color:#8B8F98;font-weight:400;font-family:'Liberation Mono', monospace;transform:scaleY(1.17);transform-origin:0 26.21px;">ORDER BY</div>
<div style="left:766px;top:311px;width:1557px;height:49px;background:#2B2D30;"></div>
<div style="left:814px;top:311px;width:1px;height:49px;background:#1E1F22;"></div>
<div style="left:1145px;top:311px;width:1px;height:49px;background:#1E1F22;"></div>
<div style="left:1434px;top:311px;width:1px;height:49px;background:#1E1F22;"></div>
<div style="left:2090px;top:311px;width:1px;height:49px;background:#1E1F22;"></div>
<div style="left:813.2px;top:360.5px;width:1.5px;height:98.5px;background:#35383C;"></div>
<div style="left:1144.8px;top:360.5px;width:1.5px;height:98.5px;background:#35383C;"></div>
<div style="left:1434px;top:360.5px;width:1.5px;height:98.5px;background:#35383C;"></div>
<div style="left:2089.8px;top:360.5px;width:1.5px;height:98.5px;background:#35383C;"></div>
<div style="left:2322.8px;top:360.5px;width:1.5px;height:98.5px;background:#35383C;"></div>
<div style="left:766px;top:408.7px;width:1558px;height:1.3px;background:#35383C;"></div>
<div style="left:766px;top:457.2px;width:1558px;height:1.4px;background:#35383C;"></div>
<svg style="position:absolute;left:824px;top:322px;overflow:visible" width="30" height="26" viewBox="0 0 30 26" fill="none" stroke="#CED0D6" stroke-width="2" stroke-linecap="round" stroke-linejoin="round"><path d="M10 2H5.5A3.5 3.5 0 0 0 2 5.5V20.5A3.5 3.5 0 0 0 5.5 24H10Z" fill="#43454A" stroke="none"/><rect x="2" y="2" width="26" height="22" rx="3.5"/><path d="M10 2V24"/></svg>
<div class="t" style="left:858.5px;top:317.79px;height:40px;line-height:40px;font-size:23.34px;color:#DFE1E5;font-weight:400;font-family:'Liberation Mono', monospace;transform:scaleY(1.17);transform-origin:0 26.21px;">release_date</div>
<svg style="position:absolute;left:1043px;top:321px;overflow:visible" width="28" height="29" viewBox="0 0 28 29" fill="none" stroke="#CED0D6" stroke-width="2" stroke-linecap="round" stroke-linejoin="round"><path d="M2.5 2.5H25.5L16.5 13.5V23L10.5 26.5V13.5Z"/></svg>
<svg style="position:absolute;left:1106px;top:327px;overflow:visible" width="11" height="16" viewBox="0 0 11 16" fill="none" stroke="none" stroke-width="2" stroke-linecap="round" stroke-linejoin="round"><path d="M5.5 0L11 6H0Z M5.5 16L11 10H0Z" fill="#A8ABB0" stroke="none"/></svg>
<svg style="position:absolute;left:1155px;top:322px;overflow:visible" width="32" height="31" viewBox="0 0 32 31" fill="none" stroke="#CED0D6" stroke-width="2" stroke-linecap="round" stroke-linejoin="round"><path d="M10 2H5.5A3.5 3.5 0 0 0 2 5.5V20.5A3.5 3.5 0 0 0 5.5 24H10Z" fill="#43454A" stroke="none"/><path d="M21 24H5.5A3.5 3.5 0 0 1 2 20.5V5.5A3.5 3.5 0 0 1 5.5 2H24.5A3.5 3.5 0 0 1 28 5.5V10M10 2V24"/><circle cx="26" cy="16" r="4" stroke="#F2C55C"/><path d="M26 20V29M26 26.5H30" stroke="#F2C55C" stroke-linecap="butt"/></svg>
<div class="t" style="left:1190.5px;top:317.79px;height:40px;line-height:40px;font-size:23.34px;color:#DFE1E5;font-weight:400;font-family:'Liberation Mono', monospace;transform:scaleY(1.17);transform-origin:0 26.21px;">series_id</div>
<svg style="position:absolute;left:1332px;top:321px;overflow:visible" width="28" height="29" viewBox="0 0 28 29" fill="none" stroke="#CED0D6" stroke-width="2" stroke-linecap="round" stroke-linejoin="round"><path d="M2.5 2.5H25.5L16.5 13.5V23L10.5 26.5V13.5Z"/></svg>
<svg style="position:absolute;left:1395px;top:327px;overflow:visible" width="11" height="16" viewBox="0 0 11 16" fill="none" stroke="none" stroke-width="2" stroke-linecap="round" stroke-linejoin="round"><path d="M5.5 0L11 6H0Z M5.5 16L11 10H0Z" fill="#A8ABB0" stroke="none"/></svg>
<svg style="position:absolute;left:1444px;top:322px;overflow:visible" width="30" height="26" viewBox="0 0 30 26" fill="none" stroke="#CED0D6" stroke-width="2" stroke-linecap="round" stroke-linejoin="round"><path d="M10 2H5.5A3.5 3.5 0 0 0 2 5.5V20.5A3.5 3.5 0 0 0 5.5 24H10Z" fill="#43454A" stroke="none"/><rect x="2" y="2" width="26" height="22" rx="3.5"/><path d="M10 2V24"/></svg>
<div class="t" style="left:1478.5px;top:317.79px;height:40px;line-height:40px;font-size:23.34px;color:#DFE1E5;font-weight:400;font-family:'Liberation Mono', monospace;transform:scaleY(1.17);transform-origin:0 26.21px;">series_info</div>
<svg style="position:absolute;left:1650px;top:321px;overflow:visible" width="28" height="29" viewBox="0 0 28 29" fill="none" stroke="#CED0D6" stroke-width="2" stroke-linecap="round" stroke-linejoin="round"><path d="M2.5 2.5H25.5L16.5 13.5V23L10.5 26.5V13.5Z"/></svg>
<svg style="position:absolute;left:2050px;top:327px;overflow:visible" width="11" height="16" viewBox="0 0 11 16" fill="none" stroke="none" stroke-width="2" stroke-linecap="round" stroke-linejoin="round"><path d="M5.5 0L11 6H0Z M5.5 16L11 10H0Z" fill="#A8ABB0" stroke="none"/></svg>
<svg style="position:absolute;left:2100px;top:322px;overflow:visible" width="30" height="26" viewBox="0 0 30 26" fill="none" stroke="#CED0D6" stroke-width="2" stroke-linecap="round" stroke-linejoin="round"><path d="M10 2H5.5A3.5 3.5 0 0 0 2 5.5V20.5A3.5 3.5 0 0 0 5.5 24H10Z" fill="#43454A" stroke="none"/><rect x="2" y="2" width="26" height="22" rx="3.5"/><path d="M10 2V24"/></svg>
<div class="t" style="left:2134.5px;top:317.79px;height:40px;line-height:40px;font-size:23.34px;color:#DFE1E5;font-weight:400;font-family:'Liberation Mono', monospace;transform:scaleY(1.17);transform-origin:0 26.21px;">title</div>
<svg style="position:absolute;left:2221px;top:321px;overflow:visible" width="28" height="29" viewBox="0 0 28 29" fill="none" stroke="#CED0D6" stroke-width="2" stroke-linecap="round" stroke-linejoin="round"><path d="M2.5 2.5H25.5L16.5 13.5V23L10.5 26.5V13.5Z"/></svg>
<svg style="position:absolute;left:2284px;top:327px;overflow:visible" width="11" height="16" viewBox="0 0 11 16" fill="none" stroke="none" stroke-width="2" stroke-linecap="round" stroke-linejoin="round"><path d="M5.5 0L11 6H0Z M5.5 16L11 10H0Z" fill="#A8ABB0" stroke="none"/></svg>
<div class="t" style="left:783.5px;top:362.79px;height:40px;line-height:40px;font-size:23.34px;color:#555A62;font-weight:400;font-family:'Liberation Mono', monospace;transform:scaleY(1.17);transform-origin:0 26.21px;">1</div>
<div class="t" style="left:783.5px;top:411.79px;height:40px;line-height:40px;font-size:23.34px;color:#555A62;font-weight:400;font-family:'Liberation Mono', monospace;transform:scaleY(1.17);transform-origin:0 26.21px;">2</div>
<div class="t" style="left:1068.5px;top:367.79px;height:40px;line-height:40px;font-size:23.34px;color:#C9CBD0;font-weight:400;font-family:'Liberation Mono', monospace;transform:scaleY(1.17);transform-origin:0 26.21px;">13182</div>
<div class="t" style="left:1068.5px;top:416.79px;height:40px;line-height:40px;font-size:23.34px;color:#C9CBD0;font-weight:400;font-family:'Liberation Mono', monospace;transform:scaleY(1.17);transform-origin:0 26.21px;">16166</div>
<div class="t" style="left:1414.5px;top:367.79px;height:40px;line-height:40px;font-size:23.34px;color:#C9CBD0;font-weight:400;font-family:'Liberation Mono', monospace;transform:scaleY(1.17);transform-origin:0 26.21px;">1</div>
<div class="t" style="left:1414.5px;top:416.79px;height:40px;line-height:40px;font-size:23.34px;color:#C9CBD0;font-weight:400;font-family:'Liberation Mono', monospace;transform:scaleY(1.17);transform-origin:0 26.21px;">2</div>
<div class="t" style="left:1442px;top:367.79px;height:40px;line-height:40px;font-size:23.34px;color:#C9CBD0;font-weight:400;font-family:'Liberation Mono', monospace;transform:scaleY(1.17);transform-origin:0 26.21px;">The IT Crowd is a British sitcom produced by…</div>
<div class="t" style="left:1442px;top:416.79px;height:40px;line-height:40px;font-size:23.34px;color:#C9CBD0;font-weight:400;font-family:'Liberation Mono', monospace;transform:scaleY(1.17);transform-origin:0 26.21px;">Silicon Valley is an American comedy televis…</div>
<div class="t" style="left:2097px;top:367.79px;height:40px;line-height:40px;font-size:23.34px;color:#C9CBD0;font-weight:400;font-family:'Liberation Mono', monospace;transform:scaleY(1.17);transform-origin:0 26.21px;">IT Crowd</div>
<div class="t" style="left:2097px;top:416.79px;height:40px;line-height:40px;font-size:23.34px;color:#C9CBD0;font-weight:400;font-family:'Liberation Mono', monospace;transform:scaleY(1.17);transform-origin:0 26.21px;">Silicon Valley</div>
<div class="t" style="left:2357.8px;top:105.63px;height:40px;line-height:40px;font-size:22.4px;color:#DFE1E5;font-weight:400;font-family:'Liberation Sans', sans-serif;letter-spacing:0.55px;-webkit-text-stroke:0.45px #DFE1E5">Files</div>
<svg style="position:absolute;left:2420px;top:120.5px;overflow:visible" width="18.5" height="11.5" viewBox="0 0 18.5 11.5" fill="none" stroke="#A8ADB4" stroke-width="2" stroke-linecap="round" stroke-linejoin="round"><path d="M2 2L9.25 9.5L16.5 2"/></svg>
<div style="left:2357px;top:175px;width:385px;height:48px;background:#43454A;border-radius:8px"></div>
<svg style="position:absolute;left:2363px;top:193px;overflow:visible" width="20" height="12" viewBox="0 0 20 12" fill="none" stroke="#A8ADB4" stroke-width="2" stroke-linecap="round" stroke-linejoin="round"><path d="M2 2L10.0 10L18 2"/></svg>
<svg style="position:absolute;left:2400px;top:186px;overflow:visible" width="30" height="26" viewBox="0 0 30 26" fill="none" stroke="#CED0D6" stroke-width="2" stroke-linecap="round" stroke-linejoin="round"><path d="M2 5A3 3 0 0 1 5 2H11L15.5 6.5H25A3 3 0 0 1 28 9.5V21A3 3 0 0 1 25 24H5A3 3 0 0 1 2 21Z" fill="none"/></svg>
<div class="t" style="left:2437px;top:179.27px;height:40px;line-height:40px;font-size:22.3px;color:#DFE1E5;font-weight:400;font-family:'Liberation Sans', sans-serif;">ydb</div>
<div class="t" style="left:2492px;top:179.13px;height:40px;line-height:40px;font-size:22.7px;color:#6F737A;font-weight:400;font-family:'Liberation Sans', sans-serif;">~/DataGripProjects/ydb</div>
<svg style="position:absolute;left:2367px;top:237px;overflow:visible" width="14" height="20" viewBox="0 0 14 20" fill="none" stroke="#A8ADB4" stroke-width="2" stroke-linecap="round" stroke-linejoin="round"><path d="M3 2.5L10 10L3 17.5"/></svg>
<svg style="position:absolute;left:2400px;top:229px;overflow:visible" width="34" height="32" viewBox="0 0 34 32" fill="none" stroke="#CED0D6" stroke-width="2.2" stroke-linecap="round" stroke-linejoin="round"><path d="M2.8 8.8H15.4M2.8 14.8H22.5M2.8 20.5H27M2.8 26.8H18.7" stroke-linecap="butt"/><circle cx="24" cy="8.8" r="7" fill="#548AF7" stroke="none"/><path d="M24 4.8V9.3L27 11.8" stroke="#1E1F22" stroke-width="1.8"/></svg>
<div class="t" style="left:2437px;top:227.32px;height:40px;line-height:40px;font-size:22.15px;color:#DFE1E5;font-weight:400;font-family:'Liberation Sans', sans-serif;">Scratches and Consoles</div>
<div style="left:2334px;top:1050px;width:407px;height:14px;background:#4D4E52;"></div>
<div class="t" style="left:26px;top:1089.17px;height:40px;line-height:40px;font-size:22.6px;color:#DFE1E5;font-weight:400;font-family:'Liberation Sans', sans-serif;-webkit-text-stroke:0.6px #DFE1E5;letter-spacing:0.6px">Services</div>
<div class="t" style="left:28px;top:1166.89px;height:40px;line-height:40px;font-size:20.5px;color:#CED0D6;font-weight:400;font-family:'Liberation Sans', sans-serif;">Tx</div>
<svg style="position:absolute;left:46px;top:1187px;overflow:visible" width="8" height="8" viewBox="0 0 8 8" fill="none" stroke="none" stroke-width="2" stroke-linecap="round" stroke-linejoin="round"><path d="M8 0V8H0Z" fill="#CED0D6" stroke="none"/></svg>
<div style="left:20px;top:1218px;width:38px;height:1px;background:#4A4C50;"></div>
<svg style="position:absolute;left:118px;top:1168px;overflow:visible" width="30" height="30" viewBox="0 0 30 30" fill="none" stroke="#CED0D6" stroke-width="2.2" stroke-linecap="round" stroke-linejoin="round"><path d="M15 2.2V27.8M2.3 15H27.8"/></svg>
<svg style="position:absolute;left:142px;top:1193px;overflow:visible" width="8" height="8" viewBox="0 0 8 8" fill="none" stroke="none" stroke-width="2" stroke-linecap="round" stroke-linejoin="round"><path d="M8 0V8H0Z" fill="#CED0D6" stroke="none"/></svg>
<svg style="position:absolute;left:168.0px;top:1172.0px;overflow:visible" width="34" height="24" viewBox="0 0 34 24" fill="none" stroke="#CED0D6" stroke-width="2.2" stroke-linecap="round" stroke-linejoin="round"><path d="M2 12.0Q17.0 -8.0 32 12.0Q17.0 32.0 2 12.0Z"/><circle cx="17.0" cy="12.0" r="5"/></svg>
<svg style="position:absolute;left:194px;top:1193px;overflow:visible" width="8" height="8" viewBox="0 0 8 8" fill="none" stroke="none" stroke-width="2" stroke-linecap="round" stroke-linejoin="round"><path d="M8 0V8H0Z" fill="#CED0D6" stroke="none"/></svg>
<svg style="position:absolute;left:220px;top:1165px;overflow:visible" width="36" height="32" viewBox="0 0 36 32" fill="none" stroke="#CED0D6" stroke-width="2.2" stroke-linecap="butt" stroke-linejoin="round"><path d="M14.5 10H7A3.5 3.5 0 0 0 3.5 13.5V25.5A3.5 3.5 0 0 0 7 29H23A3.5 3.5 0 0 0 26.5 25.5V21"/><path d="M26 3V16.6M19.2 10.2H33"/></svg>
<div style="left:269px;top:1164px;width:1px;height:37px;background:#45474C;"></div>
<svg style="position:absolute;left:292px;top:1168px;overflow:visible" width="22" height="32" viewBox="0 0 22 32" fill="none" stroke="#CED0D6" stroke-width="2.2" stroke-linecap="round" stroke-linejoin="round"><path d="M3.3 11.6L11.2 3.4L18.5 11.6M3.3 20.5L11.2 28.4L18.5 20.5"/></svg>
<svg style="position:absolute;left:344px;top:1168px;overflow:visible" width="22" height="32" viewBox="0 0 22 32" fill="none" stroke="#CED0D6" stroke-width="2.2" stroke-linecap="round" stroke-linejoin="round"><path d="M3 4.5L10.9 12.4L18.8 4.5M3 27.3L10.9 19.4L18.8 27.3"/></svg>
<div style="left:28px;top:1240px;width:24px;height:24px;background:#5A5B5E;border-radius:4px"></div>
<svg style="position:absolute;left:109px;top:1246px;overflow:visible" width="20" height="12" viewBox="0 0 20 12" fill="none" stroke="#A8ADB4" stroke-width="2" stroke-linecap="round" stroke-linejoin="round"><path d="M2 2L10.0 10L18 2"/></svg>
<svg style="position:absolute;left:146px;top:1239px;overflow:visible" width="30" height="26" viewBox="0 0 30 26" fill="none" stroke="#CED0D6" stroke-width="2" stroke-linecap="round" stroke-linejoin="round"><path d="M2 5A3 3 0 0 1 5 2H11L15.5 6.5H25A3 3 0 0 1 28 9.5V21A3 3 0 0 1 25 24H5A3 3 0 0 1 2 21Z" fill="none"/></svg>
<div class="t" style="left:183px;top:1232.37px;height:40px;line-height:40px;font-size:22px;color:#DFE1E5;font-weight:400;font-family:'Liberation Sans', sans-serif;">Database</div>
<svg style="position:absolute;left:147px;top:1293px;overflow:visible" width="20" height="12" viewBox="0 0 20 12" fill="none" stroke="#A8ADB4" stroke-width="2" stroke-linecap="round" stroke-linejoin="round"><path d="M2 2L10.0 10L18 2"/></svg>
<svg style="position:absolute;left:186.8px;top:1286px;overflow:visible" width="27" height="27" viewBox="0 0 27 27" fill="none" stroke="#CED0D6" stroke-width="2.1" stroke-linecap="round" stroke-linejoin="round"><path d="M5.5 2.1H21.2M10.2 2.1V5.9M16.3 2.1V5.9M2.1 5.1V20.8M2.1 10.1H6.1M2.1 15.9H6.1" stroke="#C9CBD0" stroke-linecap="butt"/><path d="M5.5 24.1H21.2M10.2 24.1V20.2M16.3 24.1V20.2M24.2 5.1V20.8M24.2 10.1H20.3M24.2 15.9H20.3" stroke="#4E84EA" stroke-linecap="butt"/></svg>
<div class="t" style="left:222px;top:1279.37px;height:40px;line-height:40px;font-size:22px;color:#DFE1E5;font-weight:400;font-family:'Liberation Sans', sans-serif;">YDB</div>
<div style="left:103px;top:1515px;width:753px;height:48px;background:#43454A;border-radius:8px"></div>
<svg style="position:absolute;left:220px;top:1336px;overflow:visible" width="34" height="28" viewBox="0 0 34 28" fill="none" stroke="#CED0D6" stroke-width="2" stroke-linecap="round" stroke-linejoin="round"><path d="M8 8H2V14H8"/><path d="M23 1.5H14A7.5 9.5 0 0 0 7.5 11A7.5 9.5 0 0 0 14 20.5H23Z"/><path d="M23 6H32M23 16H32" stroke-linecap="butt"/><circle cx="29" cy="22.5" r="4.2" fill="#00E000" stroke="none"/></svg>
<div class="t" style="left:259.5px;top:1328.37px;height:40px;line-height:40px;font-size:22px;color:#DFE1E5;font-weight:400;font-family:'Liberation Sans', sans-serif;">default</div>
<div class="t" style="left:336.5px;top:1328.37px;height:40px;line-height:40px;font-size:22px;color:#6F737A;font-weight:400;font-family:'Liberation Sans', sans-serif;">44 ms</div>
<svg style="position:absolute;left:185px;top:1390px;overflow:visible" width="20" height="12" viewBox="0 0 20 12" fill="none" stroke="#A8ADB4" stroke-width="2" stroke-linecap="round" stroke-linejoin="round"><path d="M2 2L10.0 10L18 2"/></svg>
<svg style="position:absolute;left:220px;top:1384px;overflow:visible" width="34" height="28" viewBox="0 0 34 28" fill="none" stroke="#CED0D6" stroke-width="2" stroke-linecap="round" stroke-linejoin="round"><path d="M8 8H2V14H8"/><path d="M23 1.5H14A7.5 9.5 0 0 0 7.5 11A7.5 9.5 0 0 0 14 20.5H23Z"/><path d="M23 6H32M23 16H32" stroke-linecap="butt"/><circle cx="29" cy="22.5" r="4.2" fill="#00E000" stroke="none"/></svg>
<div class="t" style="left:259.5px;top:1376.37px;height:40px;line-height:40px;font-size:22px;color:#DFE1E5;font-weight:400;font-family:'Liberation Sans', sans-serif;">episodes</div>
<div class="t" style="left:358.56600000000003px;top:1376.37px;height:40px;line-height:40px;font-size:22px;color:#6F737A;font-weight:400;font-family:'Liberation Sans', sans-serif;">62 ms</div>
<svg style="position:absolute;left:260px;top:1431px;overflow:visible" width="30" height="26" viewBox="0 0 30 26" fill="none" stroke="#CED0D6" stroke-width="2" stroke-linecap="round" stroke-linejoin="round"><rect x="2" y="2" width="26" height="22" rx="4" fill="#43454A"/><path d="M2 8H28M10.5 2V24M19.5 2V24"/></svg>
<div class="t" style="left:298px;top:1424.37px;height:40px;line-height:40px;font-size:22px;color:#DFE1E5;font-weight:400;font-family:'Liberation Sans', sans-serif;">episodes</div>
<div class="t" style="left:397.06600000000003px;top:1424.37px;height:40px;line-height:40px;font-size:22px;color:#6F737A;font-weight:400;font-family:'Liberation Sans', sans-serif;">62 ms</div>
<svg style="position:absolute;left:185px;top:1486px;overflow:visible" width="20" height="12" viewBox="0 0 20 12" fill="none" stroke="#A8ADB4" stroke-width="2" stroke-linecap="round" stroke-linejoin="round"><path d="M2 2L10.0 10L18 2"/></svg>
<svg style="position:absolute;left:220px;top:1480px;overflow:visible" width="34" height="28" viewBox="0 0 34 28" fill="none" stroke="#CED0D6" stroke-width="2" stroke-linecap="round" stroke-linejoin="round"><path d="M8 8H2V14H8"/><path d="M23 1.5H14A7.5 9.5 0 0 0 7.5 11A7.5 9.5 0 0 0 14 20.5H23Z"/><path d="M23 6H32M23 16H32" stroke-linecap="butt"/><circle cx="29" cy="22.5" r="4.2" fill="#00E000" stroke="none"/></svg>
<div class="t" style="left:259.5px;top:1472.37px;height:40px;line-height:40px;font-size:22px;color:#DFE1E5;font-weight:400;font-family:'Liberation Sans', sans-serif;">series</div>
<div class="t" style="left:329.185px;top:1472.37px;height:40px;line-height:40px;font-size:22px;color:#6F737A;font-weight:400;font-family:'Liberation Sans', sans-serif;">37 ms</div>
<svg style="position:absolute;left:260px;top:1527px;overflow:visible" width="30" height="26" viewBox="0 0 30 26" fill="none" stroke="#CED0D6" stroke-width="2" stroke-linecap="round" stroke-linejoin="round"><rect x="2" y="2" width="26" height="22" rx="4" fill="#43454A"/><path d="M2 8H28M10.5 2V24M19.5 2V24"/></svg>
<div class="t" style="left:298px;top:1520.37px;height:40px;line-height:40px;font-size:22px;color:#DFE1E5;font-weight:400;font-family:'Liberation Sans', sans-serif;">series</div>
<div class="t" style="left:367.685px;top:1520.37px;height:40px;line-height:40px;font-size:22px;color:#6F737A;font-weight:400;font-family:'Liberation Sans', sans-serif;">37 ms</div>
<svg style="position:absolute;left:185px;top:1582px;overflow:visible" width="20" height="12" viewBox="0 0 20 12" fill="none" stroke="#A8ADB4" stroke-width="2" stroke-linecap="round" stroke-linejoin="round"><path d="M2 2L10.0 10L18 2"/></svg>
<svg style="position:absolute;left:220px;top:1576px;overflow:visible" width="34" height="28" viewBox="0 0 34 28" fill="none" stroke="#CED0D6" stroke-width="2" stroke-linecap="round" stroke-linejoin="round"><path d="M8 8H2V14H8"/><path d="M23 1.5H14A7.5 9.5 0 0 0 7.5 11A7.5 9.5 0 0 0 14 20.5H23Z"/><path d="M23 6H32M23 16H32" stroke-linecap="butt"/><circle cx="29" cy="22.5" r="4.2" fill="#00E000" stroke="none"/></svg>
<div class="t" style="left:259.5px;top:1568.37px;height:40px;line-height:40px;font-size:22px;color:#DFE1E5;font-weight:400;font-family:'Liberation Sans', sans-serif;">console</div>
<div class="t" style="left:346.334px;top:1568.37px;height:40px;line-height:40px;font-size:22px;color:#6F737A;font-weight:400;font-family:'Liberation Sans', sans-serif;">32 ms</div>
<svg style="position:absolute;left:261.8px;top:1623px;overflow:visible" width="27" height="27" viewBox="0 0 27 27" fill="none" stroke="#CED0D6" stroke-width="2.1" stroke-linecap="round" stroke-linejoin="round"><path d="M5.5 2.1H21.2M10.2 2.1V5.9M16.3 2.1V5.9M2.1 5.1V20.8M2.1 10.1H6.1M2.1 15.9H6.1" stroke="#C9CBD0" stroke-linecap="butt"/><path d="M5.5 24.1H21.2M10.2 24.1V20.2M16.3 24.1V20.2M24.2 5.1V20.8M24.2 10.1H20.3M24.2 15.9H20.3" stroke="#4E84EA" stroke-linecap="butt"/></svg>
<div class="t" style="left:298px;top:1616.37px;height:40px;line-height:40px;font-size:22px;color:#DFE1E5;font-weight:400;font-family:'Liberation Sans', sans-serif;">console</div>
<div class="t" style="left:384.834px;top:1616.37px;height:40px;line-height:40px;font-size:22px;color:#6F737A;font-weight:400;font-family:'Liberation Sans', sans-serif;">32 ms</div>
<div style="left:880px;top:1149px;width:0px;height:0px;background:#1E1F22;"></div>
<div class="t" style="left:881px;top:1152.79px;height:40px;line-height:40px;font-size:23.34px;color:#BCBEC4;font-weight:400;font-family:'Liberation Mono', monospace;transform:scaleY(1.17);transform-origin:0 26.21px;">[2024-08-28 19:43:12] Connected</div>
<div class="t" style="left:881px;top:1192.79px;height:40px;line-height:40px;font-size:23.34px;color:#BCBEC4;font-weight:400;font-family:'Liberation Mono', monospace;transform:scaleY(1.17);transform-origin:0 26.21px;">&gt;</div>
<div class="t" style="left:909px;top:1192.79px;height:40px;line-height:40px;font-size:23.34px;color:#CF8E6D;font-weight:400;font-family:'Liberation Mono', monospace;transform:scaleY(1.17);transform-origin:0 26.21px;">SELECT</div>
<div class="t" style="left:1007px;top:1192.79px;height:40px;line-height:40px;font-size:23.34px;color:#BCBEC4;font-weight:400;font-family:'Liberation Mono', monospace;transform:scaleY(1.17);transform-origin:0 26.21px;">t.*</div>
<div class="t" style="left:909px;top:1232.79px;height:40px;line-height:40px;font-size:23.34px;color:#CF8E6D;font-weight:400;font-family:'Liberation Mono', monospace;transform:scaleY(1.17);transform-origin:0 26.21px;">FROM</div>
<div class="t" style="left:979px;top:1232.79px;height:40px;line-height:40px;font-size:23.34px;color:#BCBEC4;font-weight:400;font-family:'Liberation Mono', monospace;transform:scaleY(1.17);transform-origin:0 26.21px;">series t</div>
<div class="t" style="left:881px;top:1272.79px;height:40px;line-height:40px;font-size:23.34px;color:#BCBEC4;font-weight:400;font-family:'Liberation Mono', monospace;transform:scaleY(1.17);transform-origin:0 26.21px;">[2024-08-28 19:43:12] 2 rows retrieved starting from 1 in 24 ms (execution: 8 ms, fetching: 16 ms)</div>
<svg style="position:absolute;left:2694px;top:1172px;overflow:visible" width="36" height="32" viewBox="0 0 36 32" fill="none" stroke="#CED0D6" stroke-width="2" stroke-linecap="butt" stroke-linejoin="round"><path d="M4 4.5H32M4 14.5H16M4 24.5H16"/><path d="M21 24.5H27A5 5 0 0 0 27 14.5H20"/><path d="M24.5 20.5L20.5 24.5L24.5 28.5"/></svg>
<svg style="position:absolute;left:2694px;top:1222px;overflow:visible" width="36" height="32" viewBox="0 0 36 32" fill="none" stroke="#CED0D6" stroke-width="2" stroke-linecap="butt" stroke-linejoin="round"><path d="M4 4.5H12M4 14.5H12M4 24.5H32M23.5 3V20M17.5 14L23.5 20L29.5 14"/></svg>
<svg style="position:absolute;left:2694px;top:1274px;overflow:visible" width="36" height="32" viewBox="0 0 36 32" fill="none" stroke="#CED0D6" stroke-width="2" stroke-linecap="round" stroke-linejoin="round"><path d="M9 10V4.5H27V10M9 24H6A2.5 2.5 0 0 1 3.5 21.5V13A3 3 0 0 1 6.5 10H29.5A3 3 0 0 1 32.5 13V21.5A2.5 2.5 0 0 1 30 24H27M9 18H27V28H9Z"/><circle cx="28" cy="14" r="0.8" fill="#CED0D6"/></svg>
<svg style="position:absolute;left:2696px;top:1326px;overflow:visible" width="32" height="34" viewBox="0 0 32 34" fill="none" stroke="#CED0D6" stroke-width="2" stroke-linecap="round" stroke-linejoin="round"><path d="M4 7.5H26M9 7.5V4A2.5 2.5 0 0 1 11.5 1.5H18.5A2.5 2.5 0 0 1 21 4V7.5M7 7.5V26.5A3 3 0 0 0 10 29.5H20A3 3 0 0 0 23 26.5V7.5M12.5 13V23M17.5 13V23"/></svg>
<div class="t" style="left:30px;top:1893.34px;height:40px;line-height:40px;font-size:22.1px;color:#A9ACB2;font-weight:400;font-family:'Liberation Sans', sans-serif;">Database</div>
<div class="t" style="left:174px;top:1893.34px;height:40px;line-height:40px;font-size:22.1px;color:#A9ACB2;font-weight:400;font-family:'Liberation Sans', sans-serif;">YDB</div>
<div class="t" style="left:265px;top:1893.34px;height:40px;line-height:40px;font-size:22.1px;color:#A9ACB2;font-weight:400;font-family:'Liberation Sans', sans-serif;">database #1</div>
<div class="t" style="left:434px;top:1893.34px;height:40px;line-height:40px;font-size:22.1px;color:#A9ACB2;font-weight:400;font-family:'Liberation Sans', sans-serif;">schema #1</div>
<div class="t" style="left:588px;top:1893.34px;height:40px;line-height:40px;font-size:22.1px;color:#A9ACB2;font-weight:400;font-family:'Liberation Sans', sans-serif;">tables</div>
<svg style="position:absolute;left:141px;top:1903px;overflow:visible" width="14" height="20" viewBox="0 0 14 20" fill="none" stroke="#A9ACB2" stroke-width="2" stroke-linecap="round" stroke-linejoin="round"><path d="M3 3L11 10L3 17"/></svg>
<svg style="position:absolute;left:232.5px;top:1903px;overflow:visible" width="14" height="20" viewBox="0 0 14 20" fill="none" stroke="#A9ACB2" stroke-width="2" stroke-linecap="round" stroke-linejoin="round"><path d="M3 3L11 10L3 17"/></svg>
<svg style="position:absolute;left:403px;top:1903px;overflow:visible" width="14" height="20" viewBox="0 0 14 20" fill="none" stroke="#A9ACB2" stroke-width="2" stroke-linecap="round" stroke-linejoin="round"><path d="M3 3L11 10L3 17"/></svg>
<svg style="position:absolute;left:556.6px;top:1903px;overflow:visible" width="14" height="20" viewBox="0 0 14 20" fill="none" stroke="#A9ACB2" stroke-width="2" stroke-linecap="round" stroke-linejoin="round"><path d="M3 3L11 10L3 17"/></svg>
<svg style="position:absolute;left:665.6px;top:1903px;overflow:visible" width="14" height="20" viewBox="0 0 14 20" fill="none" stroke="#A9ACB2" stroke-width="2" stroke-linecap="round" stroke-linejoin="round"><path d="M3 3L11 10L3 17"/></svg>
<svg style="position:absolute;left:698px;top:1900px;overflow:visible" width="30" height="26" viewBox="0 0 30 26" fill="none" stroke="#A9ACB2" stroke-width="2" stroke-linecap="round" stroke-linejoin="round"><rect x="2" y="2" width="26" height="22" rx="4" fill="#43454A"/><path d="M2 8H28M10.5 2V24M19.5 2V24"/></svg>
<div class="t" style="left:738px;top:1893.44px;height:40px;line-height:40px;font-size:21.8px;color:#A9ACB2;font-weight:400;font-family:'Liberation Sans', sans-serif;">series</div>
<svg style="position:absolute;left:2622px;top:1898px;overflow:visible" width="32" height="32" viewBox="0 0 32 32" fill="none" stroke="#CED0D6" stroke-width="2" stroke-linecap="round" stroke-linejoin="round"><rect x="3" y="11" width="19" height="15" rx="3"/><path d="M12.5 15.5V21"/><path d="M18 11V8A5 5 0 0 1 28 8V11"/></svg>
<svg style="position:absolute;left:2683px;top:1897px;overflow:visible" width="32" height="34" viewBox="0 0 32 34" fill="none" stroke="#CED0D6" stroke-width="2" stroke-linecap="round" stroke-linejoin="round"><path d="M16 3A7.5 7.5 0 0 0 8.5 10.5V19L3 28H29L23.5 19V10.5A7.5 7.5 0 0 0 16 3Z"/><path d="M13 31.5H19" stroke-width="2.6"/></svg>
</div></body></html>
